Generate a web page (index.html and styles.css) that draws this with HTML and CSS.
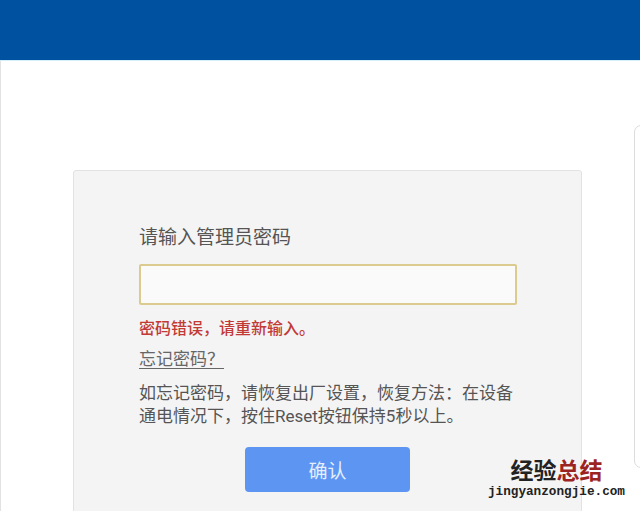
FILE: index.html
```html
<!DOCTYPE html>
<html lang="zh-CN">

<head>
    <meta charset="UTF-8" />
    <meta name="viewport" content="width=device-width, initial-scale=1.0" />
    <title>管理员登录</title>
    <link rel="stylesheet" href="styles.css">
</head>

<body>
    <header class="topbar"></header>

    <main class="main">
        <div class="card">
            <div class="label">请输入管理员密码</div>
            <input class="pwd" type="password">
            <div class="error">密码错误，请重新输入。</div>
            <a class="forgot" href="#">忘记密码？</a>
            <p class="tip">如忘记密码，请恢复出厂设置，恢复方法：在设备<br>通电情况下，按住Reset按钮保持5秒以上。</p>
            <button class="confirm">确认</button>
        </div>
        <div class="side"></div>
    </main>

    <div class="watermark">
        <div class="wm-title">经验<span class="wm-red">总结</span></div>
        <div class="wm-url">jingyanzongjie.com</div>
    </div>
</body>

</html>
```

FILE: styles.css
```css
body {
    margin: 0;
    background: #fff;
    height: 511px;
    overflow: hidden;
    font-family: Roboto, "Noto Sans CJK SC", sans-serif;
    position: relative;
}

.topbar {
    height: 60px;
    background: #0051a0;
    border-bottom: 1px solid #d6eef6;
}

.main {
    display: flex;
    align-items: flex-start;
    gap: 52px;
    padding-left: 72px;
    border-left: 1px solid #e2e2e2;
    height: 450px;
    overflow: hidden;
}

.card {
    flex: none;
    width: 442px;
    height: 400px;
    margin-top: 109px;
    padding: 54px 0 0 65px;
    background: #f4f4f4;
    border: 1px solid #e2e2e2;
    border-radius: 3px;
    display: flex;
    flex-direction: column;
    align-items: flex-start;
}

.label {
    font-size: 19px;
    line-height: 26px;
    color: #555;
}

.pwd {
    margin-top: 13px;
    width: 378px;
    height: 41px;
    box-sizing: border-box;
    border: 2px solid #dccb8e;
    border-radius: 2px;
    background: #fafafa;
    outline: none;
}

.error {
    margin-top: 13px;
    font-size: 16px;
    line-height: 22px;
    font-weight: 500;
    color: #c23a36;
}

.forgot {
    margin-top: 8px;
    font-size: 17px;
    line-height: 22px;
    color: #666;
    text-decoration: underline;
    text-underline-offset: 3px;
}

.tip {
    margin: 12px 0 0;
    font-size: 17px;
    line-height: 22.5px;
    color: #555;
}

.confirm {
    margin-top: 20px;
    margin-left: 106px;
    width: 165px;
    height: 45px;
    border: none;
    border-radius: 4px;
    background: #5c95f2;
    color: #e6eefd;
    font-family: Roboto, "Noto Sans CJK SC", sans-serif;
    font-size: 19px;
}

.side {
    flex: none;
    width: 60px;
    height: 341px;
    margin-top: 64px;
    background: #fff;
    border: 1px solid #dcdcdc;
    border-radius: 7px;
}

.watermark {
    position: absolute;
    right: 15px;
    bottom: 12px;
    text-align: center;
}

.wm-title {
    font-size: 23px;
    line-height: 25px;
    font-weight: bold;
    color: #222;
}

.wm-red {
    color: #9b2322;
}

.wm-url {
    margin-top: 1px;
    font-family: "Liberation Mono", monospace;
    font-size: 12.7px;
    line-height: 14px;
    color: #222;
    font-weight: bold;
}
```
